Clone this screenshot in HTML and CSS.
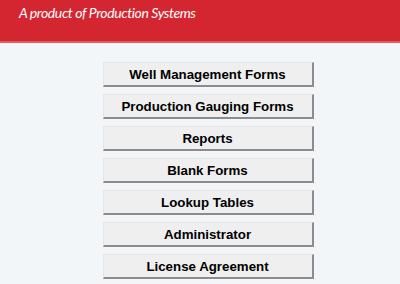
FILE: index.html
```
<!DOCTYPE html>
<html>
<head>
<meta charset="utf-8">
<link rel="stylesheet" href="styles.css">
</head>
<body>
<header class="banner">
  <div class="tagline">A product of Production Systems</div>
</header>
<main class="menu">
  <button class="menu-btn">Well Management Forms</button>
  <button class="menu-btn">Production Gauging Forms</button>
  <button class="menu-btn">Reports</button>
  <button class="menu-btn">Blank Forms</button>
  <button class="menu-btn">Lookup Tables</button>
  <button class="menu-btn">Administrator</button>
  <button class="menu-btn">License Agreement</button>
</main>
</body>
</html>
```
FILE: styles.css
```
html, body {
  margin: 0;
  padding: 0;
  background: #f2f6f9;
  height: 284px;
  overflow: hidden;
}
.banner {
  height: 41px;
  background: #d32630;
  border-bottom: 2px solid #e45a62;
  box-sizing: content-box;
}
.tagline {
  padding: 3px 0 0 19px;
  color: #ffffff;
  font-family: Lato, "Open Sans", sans-serif;
  font-style: italic;
  font-size: 14px;
  letter-spacing: -0.4px;
  line-height: 20px;
}
.menu {
  display: flex;
  flex-direction: column;
  align-items: center;
  gap: 7px;
  padding-top: 19px;
  padding-left: 16px;
}
.menu-btn {
  width: 211px;
  height: 25px;
  box-sizing: border-box;
  background: #efefef;
  border-style: solid;
  border-width: 1px 2px 2px 1px;
  border-color: #e6e6e6 #8c8c8c #8c8c8c #e6e6e6;
  font-family: "Liberation Sans", Arial, sans-serif;
  font-weight: bold;
  font-size: 13.3px;
  color: #000;
  padding: 0;
  margin: 0;
}
```
